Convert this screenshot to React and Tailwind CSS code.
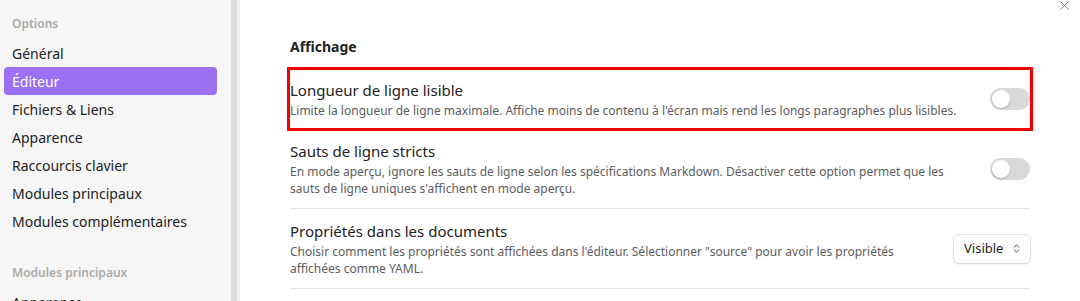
import React from 'react';
import { ChevronsUpDown } from 'lucide-react';

const navItems = [
  'Général',
  'Éditeur',
  'Fichiers & Liens',
  'Apparence',
  'Raccourcis clavier',
  'Modules principaux',
  'Modules complémentaires',
];

const Toggle = () => (
  <div className="w-[40px] h-[22px] rounded-full bg-[#d9d9d9] flex items-center px-[2px] shrink-0">
    <div className="w-[18px] h-[18px] rounded-full bg-white shadow-[0_1px_2px_rgba(0,0,0,0.2)]" />
  </div>
);

const SettingItem = ({ name, desc, control, className = '' }) => (
  <div className={`flex items-center gap-5 ${className}`}>
    <div className="flex-1 min-w-0">
      <div className="text-[15px] leading-[22px] text-[#222]">{name}</div>
      <div className="text-[12px] leading-[17px] text-[#5c5c5c] mt-[1px]">{desc}</div>
    </div>
    {control}
  </div>
);

const App = () => {
  return (
    <div
      className="relative flex w-[1080px] h-[301px] overflow-hidden bg-white"
      style={{ fontFamily: '"Noto Sans", "Open Sans", sans-serif' }}
    >
      {/* Sidebar */}
      <div className="w-[231px] shrink-0 bg-[#f6f6f6] pt-[15px]">
        <div className="px-[12px] text-[12px] leading-[18px] font-semibold text-[#ababab] mb-[6px]">Options</div>
        {navItems.map((item) => (
          <div
            key={item}
            className={`mx-[4px] w-[213px] h-[28px] px-[8px] flex items-center rounded-[4px] text-[14px] ${
              item === 'Éditeur' ? 'bg-[#9b70f5] text-white' : 'text-[#222]'
            }`}
          >
            {item}
          </div>
        ))}
        <div className="px-[12px] mt-[29px] text-[12px] leading-[18px] font-semibold text-[#ababab] mb-[6px]">
          Modules principaux
        </div>
        <div className="mx-[4px] h-[28px] px-[8px] flex items-center text-[14px] text-[#222]">Apparence</div>
      </div>
      <div className="w-[6px] shrink-0 bg-[#dcdcdc]" />
      <div className="w-[3px] shrink-0 bg-[#efefef]" />

      {/* Main */}
      <div className="flex-1 pl-[50px] pr-[50px]">
        <div className="-mt-[16px] text-[12px] leading-[18px] text-[#5c5c5c] whitespace-nowrap">
          Ajoute les éléments à la fin de la note actuelle, en haut. <span className="text-[#8a5cf5]">plus d'infos</span>
        </div>
        <div className="mt-[35px] text-[14px] leading-[20px] font-bold text-[#222]">Affichage</div>

        <SettingItem
          className="mt-[13px] py-[9px] outline-3 outline-[#f50000]"
          name="Longueur de ligne lisible"
          desc="Limite la longueur de ligne maximale. Affiche moins de contenu à l'écran mais rend les longs paragraphes plus lisibles."
          control={<Toggle />}
        />
        <SettingItem
          className="py-[11px] pt-[12px]"
          name="Sauts de ligne stricts"
          desc="En mode aperçu, ignore les sauts de ligne selon les spécifications Markdown. Désactiver cette option permet que les sauts de ligne uniques s'affichent en mode aperçu."
          control={<Toggle />}
        />
        <SettingItem
          className="py-[11px] border-t border-[#e3e3e3]"
          name="Propriétés dans les documents"
          desc={'Choisir comment les propriétés sont affichées dans l\'éditeur. Sélectionner "source" pour avoir les propriétés affichées comme YAML.'}
          control={
            <div className="w-[76px] h-[28px] shrink-0 rounded-[5px] bg-white shadow-[0_0_0_1px_rgba(0,0,0,0.08),0_1px_3px_rgba(0,0,0,0.12)] flex items-center justify-between pl-[10px] pr-[8px] text-[13px] text-[#222]">
              <span>Visible</span>
              <ChevronsUpDown size={11} strokeWidth={2} className="text-[#444]" />
            </div>
          }
        />
        <div className="border-t border-[#e3e3e3]" />
      </div>

      {/* Close button */}
      <svg className="absolute left-[1060px] top-[1px] text-[#8a8a8a]" width="9" height="9" viewBox="0 0 9 9">
        <path d="M0.5 0.5 L8.5 8.5 M8.5 0.5 L0.5 8.5" stroke="currentColor" strokeWidth="1" />
      </svg>
    </div>
  );
};

export default App;
